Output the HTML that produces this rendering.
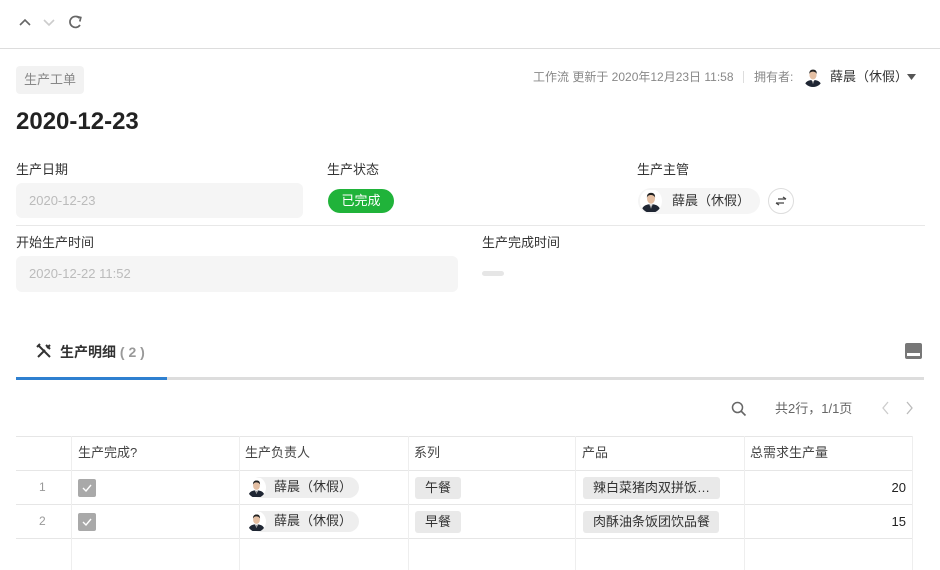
<!DOCTYPE html>
<html><head><meta charset="utf-8"><style>
*{margin:0;padding:0;box-sizing:border-box}
body{width:940px;height:570px;overflow:hidden;background:#fff;font-family:"Liberation Sans","Noto Sans CJK SC",sans-serif;color:#333;position:relative}
.a{position:absolute;white-space:nowrap}
.lbl{font-size:13px;color:#333;line-height:16px}
.inp{background:#f5f5f5;border-radius:6px;color:#bbb;font-size:13px;padding-left:13px}
.av{position:absolute;width:20px;height:20px;border-radius:50%;overflow:hidden}
.th{font-size:13px;color:#444;top:445px;line-height:16px}
.vl{position:absolute;top:436px;bottom:0;width:1px;background:#eee}
.hl{position:absolute;left:16px;width:897px;height:1px;background:#e6e6e6}
.tag{background:#e9e9e9;border-radius:3px;font-size:13px;color:#333;height:22px;line-height:22px;padding:0 10px}
.cb{width:18px;height:18px;background:#a9a9a9;border-radius:2px}
.rt{font-size:13px;line-height:16px}
</style></head><body>
<svg width="0" height="0" style="position:absolute"><defs>
<symbol id="av" viewBox="0 0 20 20"><rect width="20" height="20" fill="#fff"/><path d="M1 20 C2 14 6 13 10 13 C14 13 18 14 19 20Z" fill="#1f2633"/><path d="M8.5 13 L10 17 L11.5 13Z" fill="#fff"/><path d="M9.6 14 L10 18 L10.4 14Z" fill="#333"/><ellipse cx="10" cy="8" rx="3.6" ry="4.5" fill="#e4bfa3"/><path d="M6.3 7 C6 3 9 2.5 10 2.6 C12 2.5 14 3.5 13.7 7 C13 5 11 4.6 10 4.6 C8.5 4.6 7 5 6.3 7Z" fill="#222"/></symbol>
</defs></svg>

<svg class="a" style="left:18px;top:14px" width="70" height="16" viewBox="0 0 70 16">
<path d="M2 11 L7 6 L12 11" stroke="#666" stroke-width="1.6" fill="none"/>
<path d="M26 6 L31 11 L36 6" stroke="#ccc" stroke-width="1.6" fill="none"/>
<path d="M61.5 4.2 A5.5 5.5 0 1 0 62 11" stroke="#666" stroke-width="1.7" fill="none"/>
<path d="M58.5 2.5 L62.8 3.5 L61.8 7.5" stroke="#666" stroke-width="1.7" fill="none"/>
</svg>
<div class="a" style="left:0;top:48px;width:940px;height:1px;background:#ddd"></div>

<div class="a" style="left:16px;top:66px;width:68px;height:28px;background:#f2f2f2;border-radius:4px;font-size:13px;color:#888;line-height:28px;text-align:center">生产工单</div>
<div class="a" style="left:16px;top:107px;font-size:24px;color:#222;font-weight:bold;line-height:30px">2020-12-23</div>

<div class="a" style="left:533px;top:70px;font-size:12px;color:#888;line-height:15px">工作流 更新于 2020年12月23日 11:58</div>
<div class="a" style="left:743px;top:71px;width:1px;height:12px;background:#ddd"></div>
<div class="a" style="left:754px;top:70px;font-size:12px;color:#888;line-height:15px">拥有者:</div>
<svg class="av" style="left:803px;top:67px"><use href="#av"/></svg>
<div class="a" style="left:830px;top:69px;font-size:13px;color:#333;line-height:16px">薛晨（休假）</div>
<svg class="a" style="left:907px;top:74px" width="9" height="6"><path d="M0 0 L9 0 L4.5 6Z" fill="#555"/></svg>

<div class="a lbl" style="left:16px;top:162px">生产日期</div>
<div class="a lbl" style="left:327px;top:162px">生产状态</div>
<div class="a lbl" style="left:637px;top:162px">生产主管</div>
<div class="a inp" style="left:16px;top:183px;width:287px;height:35px;line-height:35px">2020-12-23</div>
<div class="a" style="left:328px;top:189px;width:66px;height:24px;background:#20b33a;border-radius:12px;color:#fff;font-size:13px;line-height:24px;text-align:center">已完成</div>
<div class="a" style="left:638px;top:188px;width:122px;height:26px;background:#f5f5f5;border-radius:13px"></div>
<svg class="av" style="left:640px;top:189px;width:22px;height:24px"><use href="#av"/></svg>
<div class="a" style="left:672px;top:193px;font-size:13px;color:#333;line-height:16px">薛晨（休假）</div>
<div class="a" style="left:768px;top:188px;width:26px;height:26px;border:1px solid #ddd;border-radius:50%"></div>
<svg class="a" style="left:775px;top:196px" width="12" height="10"><path d="M3 3 L11 3 M8 1 L11 3 M1 7 L9 7 M4 9 L1 7" stroke="#444" stroke-width="1.3" fill="none"/></svg>
<div class="a" style="left:16px;top:225px;width:909px;height:1px;background:#e8e8e8"></div>

<div class="a lbl" style="left:16px;top:235px">开始生产时间</div>
<div class="a lbl" style="left:482px;top:235px">生产完成时间</div>
<div class="a inp" style="left:16px;top:256px;width:442px;height:36px;line-height:36px">2020-12-22 11:52</div>
<div class="a" style="left:482px;top:271px;width:22px;height:5px;background:#e6e6e6;border-radius:3px"></div>

<svg class="a" style="left:36px;top:343px" width="16" height="16" viewBox="0 0 16 16"><path d="M2 14 L9 7 M11 5 L14 2 M2 2 L14 14" stroke="#333" stroke-width="2" fill="none"/><path d="M10 2 L14 6" stroke="#333" stroke-width="2"/><path d="M1 4 L4 1" stroke="#333" stroke-width="2"/></svg>
<div class="a" style="left:60px;top:343px;font-size:14px;font-weight:bold;color:#333;line-height:18px">生产明细 <span style="color:#999">( 2 )</span></div>
<div class="a" style="left:16px;top:377px;width:908px;height:3px;background:#ddd"></div>
<div class="a" style="left:16px;top:377px;width:151px;height:3px;background:#2f80d0"></div>
<svg class="a" style="left:905px;top:343px" width="17" height="16"><rect x="0" y="0" width="17" height="16" rx="2" fill="#777"/><rect x="2" y="10" width="13" height="3" fill="#fff"/></svg>

<svg class="a" style="left:731px;top:401px" width="16" height="16"><circle cx="6.5" cy="6.5" r="5" stroke="#666" stroke-width="1.5" fill="none"/><path d="M10 10 L14.5 14.5" stroke="#666" stroke-width="1.6"/></svg>
<div class="a" style="left:775px;top:401px;font-size:13px;color:#666;line-height:16px">共2行，1/1页</div>
<svg class="a" style="left:880px;top:401px" width="40" height="14"><path d="M8 1 L3 7 L8 13" stroke="#ccc" stroke-width="1.3" fill="none"/><path d="M27 1 L32 7 L27 13" stroke="#bbb" stroke-width="1.3" fill="none"/></svg>

<div class="hl" style="top:436px"></div>
<div class="hl" style="top:470px"></div>
<div class="hl" style="top:504px"></div>
<div class="hl" style="top:538px"></div>
<div class="vl" style="left:71px"></div><div class="vl" style="left:239px"></div><div class="vl" style="left:408px"></div><div class="vl" style="left:575px"></div><div class="vl" style="left:744px"></div><div class="vl" style="left:912px"></div>
<div class="a th" style="left:78px">生产完成?</div>
<div class="a th" style="left:245px">生产负责人</div>
<div class="a th" style="left:414px">系列</div>
<div class="a th" style="left:582px">产品</div>
<div class="a th" style="left:750px">总需求生产量</div>

<div class="a" style="left:39px;top:480px;font-size:12px;color:#999;line-height:15px">1</div>
<div class="a" style="left:39px;top:514px;font-size:12px;color:#999;line-height:15px">2</div>
<div class="a cb" style="left:78px;top:479px"></div>
<div class="a cb" style="left:78px;top:513px"></div>
<svg class="a" style="left:82px;top:484px" width="10" height="8"><path d="M1 4 L4 7 L9 1" stroke="#fff" stroke-width="1.4" fill="none"/></svg>
<svg class="a" style="left:82px;top:518px" width="10" height="8"><path d="M1 4 L4 7 L9 1" stroke="#fff" stroke-width="1.4" fill="none"/></svg>

<div class="a" style="left:250px;top:477px;width:109px;height:21px;background:#eee;border-radius:11px"></div>
<svg class="av" style="left:247px;top:477px;width:19px;height:21px"><use href="#av"/></svg>
<div class="a rt" style="left:274px;top:479px;color:#333">薛晨（休假）</div>
<div class="a" style="left:250px;top:511px;width:109px;height:21px;background:#eee;border-radius:11px"></div>
<svg class="av" style="left:247px;top:511px;width:19px;height:21px"><use href="#av"/></svg>
<div class="a rt" style="left:274px;top:513px;color:#333">薛晨（休假）</div>

<div class="a tag" style="left:415px;top:477px">午餐</div>
<div class="a tag" style="left:415px;top:511px">早餐</div>
<div class="a tag" style="left:583px;top:477px;width:137px">辣白菜猪肉双拼饭…</div>
<div class="a tag" style="left:583px;top:511px;width:136px">肉酥油条饭团饮品餐</div>
<div class="a rt" style="left:860px;width:46px;text-align:right;top:480px;color:#222">20</div>
<div class="a rt" style="left:860px;width:46px;text-align:right;top:514px;color:#222">15</div>
</body></html>
